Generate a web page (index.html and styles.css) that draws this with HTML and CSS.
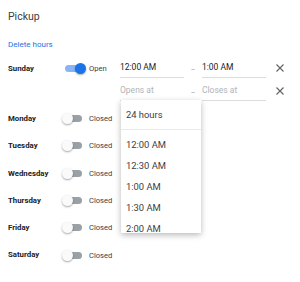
FILE: index.html
```html
<!DOCTYPE html>
<html lang="en">
<head>
    <meta charset="UTF-8">
    <meta name="viewport" content="width=device-width, initial-scale=1.0">
    <title>Pickup hours</title>
    <link rel="stylesheet" href="styles.css">
</head>
<body>
    <h1 class="title">Pickup</h1>
    <a class="delete" href="#">Delete hours</a>

    <div class="days">
        <div class="day open">
            <div class="day-name">Sunday</div>
            <div class="cell"><span class="switch on"></span></div>
            <div class="cell status">Open</div>
            <div class="ranges">
                <div class="range">
                    <div class="field">12:00 AM</div>
                    <div class="dash">–</div>
                    <div class="field">1:00 AM</div>
                    <div class="remove"><svg width="8" height="8" viewBox="0 0 8 8"><path d="M0.5 0.5L7.5 7.5M7.5 0.5L0.5 7.5" stroke="#5f6368" stroke-width="1.1"/></svg></div>
                </div>
                <div class="range">
                    <div class="field empty">Opens at
                        <div class="menu">
                            <div class="menu-item first">24 hours</div>
                            <div class="menu-list">
                                <div class="menu-item">12:00 AM</div>
                                <div class="menu-item">12:30 AM</div>
                                <div class="menu-item">1:00 AM</div>
                                <div class="menu-item">1:30 AM</div>
                                <div class="menu-item">2:00 AM</div>
                            </div>
                        </div>
                    </div>
                    <div class="dash">–</div>
                    <div class="field empty">Closes at</div>
                    <div class="remove"><svg width="8" height="8" viewBox="0 0 8 8"><path d="M0.5 0.5L7.5 7.5M7.5 0.5L0.5 7.5" stroke="#5f6368" stroke-width="1.1"/></svg></div>
                </div>
            </div>
        </div>
        <div class="day">
            <div class="day-name">Monday</div>
            <div class="cell"><span class="switch"></span></div>
            <div class="cell status">Closed</div>
        </div>
        <div class="day">
            <div class="day-name">Tuesday</div>
            <div class="cell"><span class="switch"></span></div>
            <div class="cell status">Closed</div>
        </div>
        <div class="day">
            <div class="day-name">Wednesday</div>
            <div class="cell"><span class="switch"></span></div>
            <div class="cell status">Closed</div>
        </div>
        <div class="day">
            <div class="day-name">Thursday</div>
            <div class="cell"><span class="switch"></span></div>
            <div class="cell status">Closed</div>
        </div>
        <div class="day">
            <div class="day-name">Friday</div>
            <div class="cell"><span class="switch"></span></div>
            <div class="cell status">Closed</div>
        </div>
        <div class="day">
            <div class="day-name">Saturday</div>
            <div class="cell"><span class="switch"></span></div>
            <div class="cell status">Closed</div>
        </div>
    </div>
</body>
</html>
```

FILE: styles.css
```css
body {
    margin: 0;
    padding: 10px 8px 0;
    font-family: Roboto, "Liberation Sans", sans-serif;
    background-color: #fff;
    color: #202124;
}
.title {
    margin: 0;
    font-size: 10.5px;
    font-weight: 400;
    line-height: 14px;
    color: #3c4043;
}
.delete {
    display: block;
    margin-top: 15px;
    font-size: 8px;
    line-height: 12px;
    color: #1a73e8;
    text-decoration: none;
}
.days {
    margin-top: 6px;
}
.day {
    --h: 27.3px;
    display: flex;
    align-items: flex-start;
}
.day.open {
    --h: 23px;
    margin-bottom: 2px;
}
.day-name {
    width: 56px;
    height: var(--h);
    line-height: var(--h);
    font-size: 7.8px;
    font-weight: 700;
    color: #202124;
}
.cell {
    height: var(--h);
    display: flex;
    align-items: center;
}
.cell:nth-child(2) {
    width: 25px;
}
.status {
    width: 31px;
    font-size: 7.6px;
    color: #3c4043;
}
.switch {
    position: relative;
    display: block;
    width: 17px;
    height: 7px;
    margin-left: 1px;
    border-radius: 4px;
    background-color: #9aa0a6;
}
.switch::after {
    content: "";
    position: absolute;
    top: -2px;
    left: -3px;
    width: 11px;
    height: 11px;
    border-radius: 50%;
    background-color: #fafafa;
    box-shadow: 0 1px 2px rgba(0, 0, 0, 0.35);
}
.switch.on {
    background-color: #8ab4f8;
}
.switch.on::after {
    left: 10px;
    background-color: #1a73e8;
}
.range {
    display: flex;
    align-items: flex-start;
    height: 23px;
}
.field {
    position: relative;
    width: 64px;
    height: 21px;
    box-sizing: border-box;
    border-bottom: 1px solid #dadce0;
    display: flex;
    align-items: center;
    font-size: 8.5px;
    color: #202124;
}
.field.empty {
    color: #b0b4b9;
}
.dash {
    width: 18px;
    height: 21px;
    line-height: 26px;
    text-align: center;
    font-size: 7px;
    color: #9aa0a6;
}
.remove {
    margin-left: 10px;
    height: 21px;
    display: flex;
    align-items: center;
}
.menu {
    position: absolute;
    top: 100%;
    left: 1px;
    width: 80px;
    height: 133px;
    overflow: hidden;
    background-color: #fff;
    box-shadow: 0 2px 6px rgba(0, 0, 0, 0.28);
    z-index: 2;
}
.menu-item {
    height: 21px;
    line-height: 21px;
    padding-left: 5px;
    font-size: 9.4px;
    color: #3c4043;
}
.menu-item.first {
    height: 29px;
    line-height: 29px;
    border-bottom: 1px solid #e8eaed;
}
.menu-list {
    padding-top: 4px;
}
```
